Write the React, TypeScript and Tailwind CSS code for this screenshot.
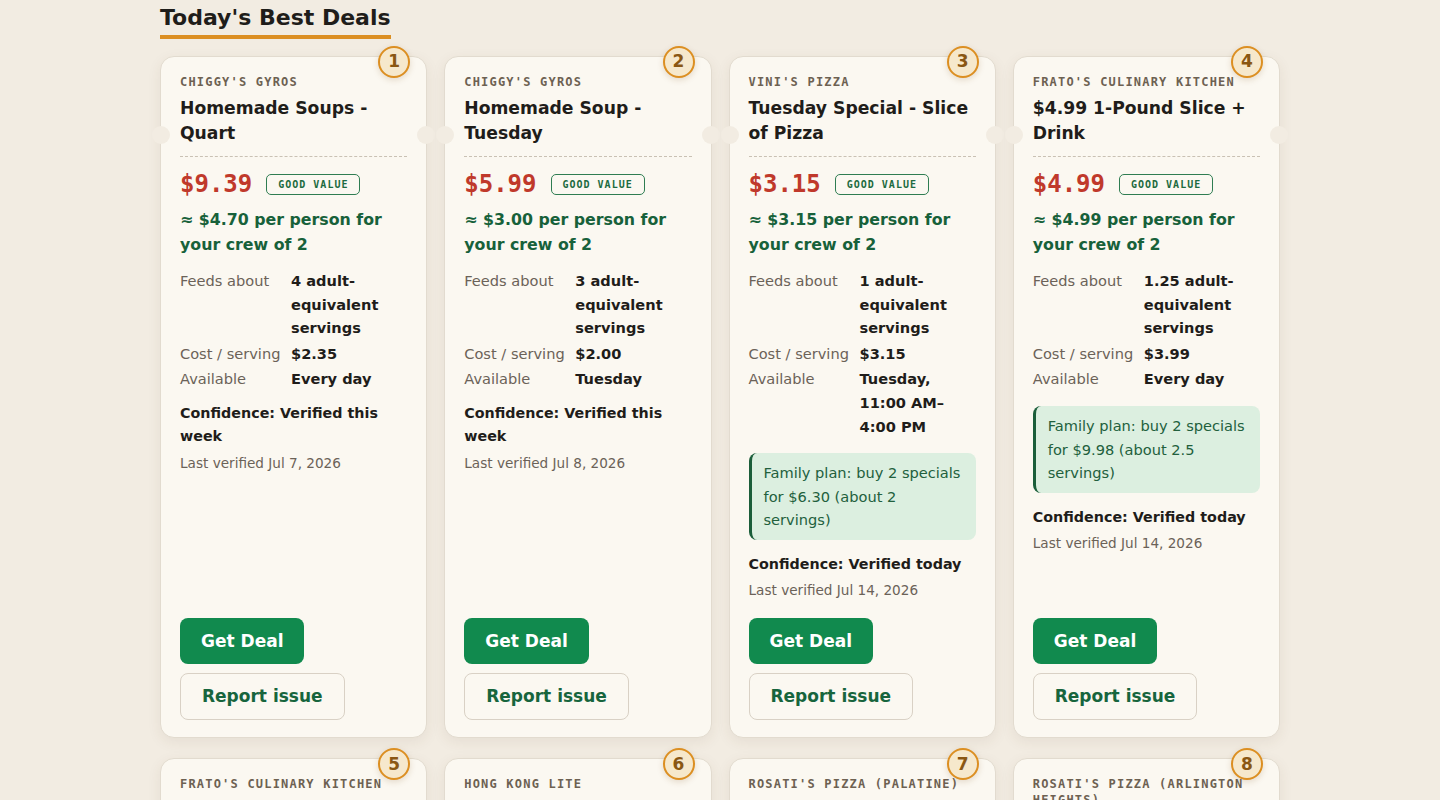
type Deal = {
  rank: number;
  vendor: string;
  title: string;
  price: string;
  perPerson: string;
  feeds: string;
  costPerServing: string;
  available: string;
  familyPlan?: string;
  confidence: string;
  lastVerified: string;
};

const deals: Deal[] = [
  {
    rank: 1,
    vendor: "Chiggy's Gyros",
    title: "Homemade Soups - Quart",
    price: "$9.39",
    perPerson: "≈ $4.70 per person for your crew of 2",
    feeds: "4 adult-equivalent servings",
    costPerServing: "$2.35",
    available: "Every day",
    confidence: "Verified this week",
    lastVerified: "Jul 7, 2026",
  },
  {
    rank: 2,
    vendor: "Chiggy's Gyros",
    title: "Homemade Soup - Tuesday",
    price: "$5.99",
    perPerson: "≈ $3.00 per person for your crew of 2",
    feeds: "3 adult-equivalent servings",
    costPerServing: "$2.00",
    available: "Tuesday",
    confidence: "Verified this week",
    lastVerified: "Jul 8, 2026",
  },
  {
    rank: 3,
    vendor: "Vini's Pizza",
    title: "Tuesday Special - Slice of Pizza",
    price: "$3.15",
    perPerson: "≈ $3.15 per person for your crew of 2",
    feeds: "1 adult-equivalent servings",
    costPerServing: "$3.15",
    available: "Tuesday, 11:00 AM–4:00 PM",
    familyPlan: "Family plan: buy 2 specials for $6.30 (about 2 servings)",
    confidence: "Verified today",
    lastVerified: "Jul 14, 2026",
  },
  {
    rank: 4,
    vendor: "Frato's Culinary Kitchen",
    title: "$4.99 1-Pound Slice + Drink",
    price: "$4.99",
    perPerson: "≈ $4.99 per person for your crew of 2",
    feeds: "1.25 adult-equivalent servings",
    costPerServing: "$3.99",
    available: "Every day",
    familyPlan: "Family plan: buy 2 specials for $9.98 (about 2.5 servings)",
    confidence: "Verified today",
    lastVerified: "Jul 14, 2026",
  },
  {
    rank: 5,
    vendor: "Frato's Culinary Kitchen",
    title: "Lunch Combo - Pasta + Salad",
    price: "$8.99",
    perPerson: "≈ $4.50 per person for your crew of 2",
    feeds: "2 adult-equivalent servings",
    costPerServing: "$4.50",
    available: "Weekdays",
    confidence: "Verified this week",
    lastVerified: "Jul 10, 2026",
  },
  {
    rank: 6,
    vendor: "Hong Kong Lite",
    title: "Lunch Special - Entrée + Rice",
    price: "$9.25",
    perPerson: "≈ $4.63 per person for your crew of 2",
    feeds: "2 adult-equivalent servings",
    costPerServing: "$4.63",
    available: "Mon–Sat",
    confidence: "Verified this week",
    lastVerified: "Jul 9, 2026",
  },
  {
    rank: 7,
    vendor: "Rosati's Pizza (Palatine)",
    title: "Large Thin Crust Pizza",
    price: "$14.99",
    perPerson: "≈ $7.50 per person for your crew of 2",
    feeds: "4 adult-equivalent servings",
    costPerServing: "$3.75",
    available: "Every day",
    confidence: "Verified today",
    lastVerified: "Jul 14, 2026",
  },
  {
    rank: 8,
    vendor: "Rosati's Pizza (Arlington Heights)",
    title: "Tuesday Large Pizza Deal",
    price: "$12.99",
    perPerson: "≈ $6.50 per person for your crew of 2",
    feeds: "4 adult-equivalent servings",
    costPerServing: "$3.25",
    available: "Tuesday",
    confidence: "Verified today",
    lastVerified: "Jul 14, 2026",
  },
];

const sans = "font-['DejaVu_Sans','Verdana',sans-serif]";
const mono = "font-['DejaVu_Sans_Mono','Liberation_Mono',monospace]";

function DetailRow({ label, value }: { label: string; value: string }) {
  return (
    <>
      <dt className="text-[#6b6258]">{label}</dt>
      <dd className="font-bold text-[#1f1d1a]">{value}</dd>
    </>
  );
}

function DealCard({ deal }: { deal: Deal }) {
  return (
    <article className="relative flex flex-col rounded-[14px] border border-[#e2dbcf] bg-[#fbf8f1] px-[19px] pb-[17px] pt-[17px] shadow-[0_4px_14px_rgba(90,70,40,0.08)]">
      {/* rank medallion */}
      <span className="absolute -top-[11px] right-[16px] flex h-[32px] w-[32px] items-center justify-center rounded-full border-2 border-[#dc8f22] bg-[#f6e8cc] text-[17px] font-bold text-[#8a5713] shadow-[0_2px_6px_rgba(120,80,20,0.18)]">
        {deal.rank}
      </span>

      {/* ticket notches */}
      <span className="absolute -left-[9px] top-[69px] h-[18px] w-[18px] rounded-full bg-[#f2ece2]" />
      <span className="absolute -right-[9px] top-[69px] h-[18px] w-[18px] rounded-full bg-[#f2ece2]" />

      <div className="border-b border-dashed border-[#c9c1b4] pb-[10px]">
        <p className={`${mono} text-[12px] font-bold uppercase leading-[16px] tracking-[0.1em] text-[#6d6152]`}>
          {deal.vendor}
        </p>
        <h3 className="mt-[6px] text-[17.2px] font-bold leading-[25px] text-[#1f1d1a]">{deal.title}</h3>
      </div>

      <div className="mt-[12px] flex h-[30px] items-center gap-[14px]">
        <span className={`${mono} text-[24px] font-bold leading-[30px] text-[#c0392b]`}>{deal.price}</span>
        <span
          className={`${mono} rounded-[5px] border border-[#2f7d52] px-[11px] py-[3px] text-[10px] font-bold leading-[13px] tracking-[0.1em] text-[#1d6b40]`}
        >
          GOOD VALUE
        </span>
      </div>

      <p className="mt-[8px] text-[15.8px] font-bold leading-[25px] text-[#17613a]">{deal.perPerson}</p>

      <dl className="mt-[12px] grid grid-cols-[111px_1fr] gap-y-[2px] text-[14.6px] leading-[23.6px]">
        <DetailRow label="Feeds about" value={deal.feeds} />
        <DetailRow label="Cost / serving" value={deal.costPerServing} />
        <DetailRow label="Available" value={deal.available} />
      </dl>

      {deal.familyPlan && (
        <div className="mt-[15px] rounded-[8px] border-l-[3px] border-[#1b5e3a] bg-[#dcefe0] py-[8px] pl-[12px] pr-[12px] text-[14.6px] leading-[23.6px] text-[#22603d]">
          {deal.familyPlan}
        </div>
      )}

      <p
        className={
          deal.familyPlan
            ? "mt-[13px] text-[14.3px] font-bold leading-[23.4px] text-[#1f1d1a]"
            : "mt-[11px] text-[14.3px] font-bold leading-[23.4px] text-[#1f1d1a]"
        }
      >
        Confidence: {deal.confidence}
      </p>
      <p className="mt-[3px] text-[13.6px] leading-[22px] text-[#6b6258]">Last verified {deal.lastVerified}</p>

      <div className="mt-auto flex flex-col items-start gap-[9px] pt-[17px]">
        <button className="h-[46px] rounded-[8px] bg-[#118a4e] px-[21px] text-[17px] font-bold text-white">
          Get Deal
        </button>
        <button className="h-[47px] rounded-[8px] border border-[#d9d1c5] bg-transparent px-[21px] text-[17px] font-bold text-[#17653d]">
          Report issue
        </button>
      </div>
    </article>
  );
}

export default function App() {
  return (
    <div className={`${sans} min-h-screen bg-[#f2ece2] text-[#1f1d1a]`}>
      <section className="mx-auto w-[1120px] pb-[40px] pt-[4px]">
        <h2 className="inline-block border-b-[4px] border-[#dc8f22] pb-[3px] text-[22px] font-bold leading-[28px] text-[#1f1d1a]">
          Today's Best Deals
        </h2>
        <div className="mt-[17px] grid grid-cols-4 gap-x-[17px] gap-y-[20px]">
          {deals.map((deal) => (
            <DealCard key={deal.rank} deal={deal} />
          ))}
        </div>
      </section>
    </div>
  );
}
